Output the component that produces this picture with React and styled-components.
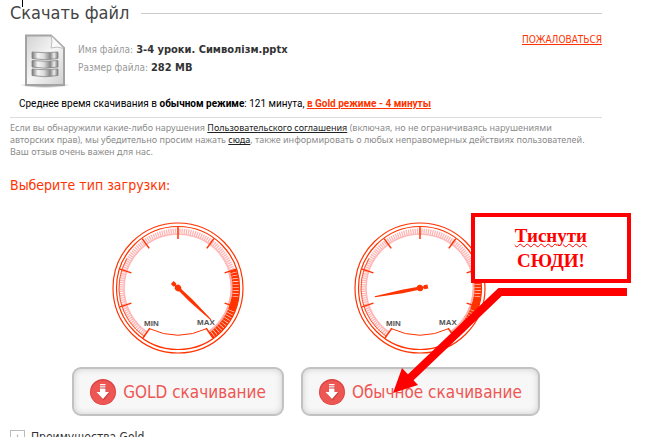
/**
 * @title 다운로드 선택 페이지
 */
import React from 'react'
import styled, {createGlobalStyle} from 'styled-components'

const RED = '#ff3300'

//게이지 각도(위쪽 기준, 시계방향)를 좌표로 변환
const polar = (angle, r) => {
  const rad = (angle * Math.PI) / 180
  return [Math.sin(rad) * r, -Math.cos(rad) * r]
}

const arc = (from, to, r) => {
  const [x1, y1] = polar(from, r)
  const [x2, y2] = polar(to, r)
  return `M${x1} ${y1}A${r} ${r} 0 ${to - from > 180 ? 1 : 0} 1 ${x2} ${y2}`
}

const ticks = [-145, -108, -72, -36, 0, 36, 72, 108, 145]

//---------------------------------------------------------------------
const Gauge = ({needle}) => (
  <GaugeSvg viewBox="-66 -66 132 132" aria-hidden="true">
    <g fill="none" stroke={RED}>
      <path d={arc(-145, 72, 57)} stroke="#ffb4b4" strokeWidth="5" strokeDasharray="1.3 .9" />
      <path d={arc(-145, 72, 54)} stroke="#ffb8b8" strokeWidth="1.6" />
      <path d={arc(72, 145, 54)} stroke="#ffb0a8" strokeWidth="3" />
      <path d={arc(72, 145, 58)} strokeWidth="7" strokeDasharray="2.4 .6" />
      <path d={arc(100, 112, 58)} strokeWidth="7" />
      <circle r="65" strokeWidth="1.2" />
      <circle r="61.5" strokeWidth="1.2" />
      <path d={arc(-145, -60, 59)} strokeWidth=".8" />
      {ticks.map((angle) => {
        const [x1, y1] = polar(angle, 49)
        const [x2, y2] = polar(angle, 61)
        return <line key={angle} x1={x1} y1={y1} x2={x2} y2={y2} strokeWidth="1.5" />
      })}
      <path d="M-29 40.5Q0 54 29 40.5" />
    </g>
    <g transform={`rotate(${needle})`} fill={RED}>
      <path d="M0 -1.5L18 -1.8L46 -.5V.5L18 1.8L0 1.5Z" />
      <path d="M-8 -2H-4V-1H0V1H-4V2H-8Z" />
      <circle r="3.2" />
    </g>
    <g fill="#555" fontFamily="Liberation Sans, Arial, sans-serif" fontSize="8" fontWeight="bold">
      <text x="-34" y="38">
        MIN
      </text>
      <text x="19" y="37">
        MAX
      </text>
    </g>
  </GaugeSvg>
)

const FileIcon = () => (
  <svg width="50" height="54" viewBox="0 0 50 54" aria-hidden="true">
    <defs>
      <linearGradient id="paper" x2="1" y2="1">
        <stop offset="0" stopColor="#d2d2d2" />
        <stop offset=".5" stopColor="#f6f6f6" />
        <stop offset="1" stopColor="#cfcfcf" />
      </linearGradient>
      <linearGradient id="disk">
        <stop offset="0" stopColor="#777" />
        <stop offset=".22" stopColor="#f4f4f4" />
        <stop offset=".45" stopColor="#ddd" />
        <stop offset=".7" stopColor="#888" />
        <stop offset=".85" stopColor="#eee" />
        <stop offset="1" stopColor="#777" />
      </linearGradient>
      <radialGradient id="shade">
        <stop offset="0" stopColor="#666" />
        <stop offset="1" stopColor="#666" stopOpacity="0" />
      </radialGradient>
    </defs>
    <ellipse cx="25" cy="51" rx="25" ry="3" fill="url(#shade)" />
    <path d="M6 1.5H31L44 14V51H6Z" fill="url(#paper)" stroke="#a3a3a3" strokeWidth="2" />
    <path d="M31 1.5L44 14.5Q37 12 31 14Q33 8 31 1.5Z" fill="#fafafa" stroke="#b0b0b0" strokeWidth=".8" />
    {[18, 26.5, 35].map((y) => (
      <path
        key={y}
        d={`M12 ${y}Q25 ${y + 1.5} 38 ${y}V${y + 6.5}Q25 ${y + 9} 12 ${y + 6.5}Z`}
        fill="url(#disk)"
        stroke="#858585"
        strokeWidth=".8"
      />
    ))}
  </svg>
)

const DownloadIcon = () => (
  <svg width="26" height="26" viewBox="0 0 26 26" aria-hidden="true">
    <circle cx="13" cy="13" r="13" fill="#d9403f" />
    <circle cx="13" cy="13.5" r="12" fill="#ee5653" />
    <path d="M10.5 7H16V13.5H20L13.5 21.5L7 13.5H10.5Z" fill="#9e3532" opacity=".6" />
    <path d="M10 5H15.5V6.3H10ZM10 7.3H15.5V8.6H10ZM10 9.6H15.5V13H19L13 20L6.5 13H10Z" fill="#fff" />
  </svg>
)

//---------------------------------------------------------------------
export default () => {
  return (
    <Page>
      <GlobalStyle />
      <Caret />
      <Title>Скачать файл</Title>

      <FileRow>
        <FileIcon />
        <FileInfo>
          <div>
            <dt>Имя файла:</dt>
            <dd>3-4 уроки. Символізм.pptx</dd>
          </div>
          <div>
            <dt>Размер файла:</dt>
            <dd>282 MB</dd>
          </div>
        </FileInfo>
        <RedLink href="#complain">ПОЖАЛОВАТЬСЯ</RedLink>
      </FileRow>

      <Average>
        Среднее время скачивания в <b>обычном режиме</b>: 121 минута,{' '}
        <RedLink href="#gold" $bold>
          в Gold режиме - 4 минуты
        </RedLink>
      </Average>

      <Notice>
        Если вы обнаружили какие-либо нарушения <a href="#terms">Пользовательского соглашения</a> (включая, но не
        ограничиваясь нарушениями
        <br />
        авторских прав), мы убедительно просим нажать <a href="#abuse">сюда</a>, также информировать о любых
        неправомерных действиях пользователей.
        <br />
        Ваш отзыв очень важен для нас.
      </Notice>

      <SubTitle>Выберите тип загрузки:</SubTitle>

      <Options>
        <Option>
          <Gauge needle={44} />
          <DownloadButton type="button">
            <DownloadIcon />
            GOLD скачивание
          </DownloadButton>
        </Option>
        <Option>
          <Gauge needle={169} />
          <DownloadButton type="button">
            <DownloadIcon />
            Обычное скачивание
          </DownloadButton>
          <Arrow viewBox="0 0 236 106" aria-hidden="true">
            <path d="M234 5H107L17 91" fill="none" stroke="#f00" strokeWidth="8" />
            <path d="M0 106L9 81L25 98Z" fill="#f00" />
          </Arrow>
          <Callout>
            <u>Тиснути</u>
            <br />
            СЮДИ!
          </Callout>
        </Option>
      </Options>

      <Benefits>
        <button type="button" aria-label="Преимущества Gold">
          +
        </button>
        Преимущества Gold
      </Benefits>
    </Page>
  )
}

//---------------------------------------------------------------------
const GlobalStyle = createGlobalStyle`
  html,
  body {
    height: 100%;
    overflow: hidden;
  }
  body {
    margin: 0;
    background: #fff;
    font-family: 'DejaVu Sans Condensed', 'Noto Sans', sans-serif;
    font-size: 10px;
  }
  * {
    box-sizing: border-box;
  }
`

const Page = styled.main`
  position: relative;
  padding: 2px 46px 0 10px;
`

const Caret = styled.span`
  position: absolute;
  top: 0;
  left: 22px;
  width: 1px;
  height: 7px;
  background: #000;
`

const Title = styled.h1`
  display: flex;
  align-items: center;
  gap: 12px;
  margin: 0;
  color: #444;
  font-size: 18px;
  font-weight: normal;
  line-height: 22px;

  &::after {
    content: '';
    flex: 1;
    height: 1px;
    background: #ccc;
  }
`

const FileRow = styled.section`
  display: flex;
  align-items: flex-start;
  margin-top: 10px;
  padding-left: 10px;
`

const FileInfo = styled.dl`
  flex: 1;
  margin: 7px 0 0 8px;
  line-height: 18px;

  div {
    display: flex;
    align-items: baseline;
    gap: 3px;
  }
  dt {
    color: #999;
  }
  dd {
    margin: 0;
    color: #333;
    font-size: 11px;
    font-weight: bold;
  }
`

const RedLink = styled.a`
  color: ${RED};
  font-weight: ${({$bold}) => ($bold ? 'bold' : 'normal')};
  line-height: 12px;
  white-space: nowrap;
`

const Average = styled.p`
  margin: 9px 0 0;
  padding: 0 0 6px 9px;
  border-bottom: 1px solid #ddd;
  color: #000;
  font-family: Roboto, sans-serif;
  line-height: 14px;
`

const Notice = styled.p`
  margin: 4px 0 0;
  color: #8c8c8c;
  font-family: 'Noto Sans', sans-serif;
  font-size: 9px;
  line-height: 12px;

  a {
    color: #222;
  }
`

const SubTitle = styled.h2`
  margin: 17px 0 0;
  color: ${RED};
  font-size: 14px;
  font-weight: normal;
  line-height: 20px;
`

const Options = styled.section`
  display: flex;
  justify-content: center;
  gap: 17px;
  margin-top: 27px;
`

const Option = styled.div`
  position: relative;
  display: flex;
  flex-direction: column;
  align-items: center;
  gap: 13px;
`

const GaugeSvg = styled.svg`
  width: 132px;
  height: 132px;
`

const DownloadButton = styled.button`
  display: flex;
  align-items: center;
  gap: 7px;
  height: 49px;
  padding: 0 16px;
  border: 2px solid #c2c2c2;
  border-radius: 9px;
  background: #f7f7f7;
  box-shadow: inset 0 0 6px #ccc;
  color: #ee5653;
  font-family: inherit;
  font-size: 17px;
  white-space: nowrap;
`

const Arrow = styled.svg`
  position: absolute;
  top: 65px;
  left: 92px;
  width: 236px;
  height: 106px;
  pointer-events: none;
`

const Callout = styled.div`
  position: absolute;
  top: -9px;
  left: 170px;
  width: 160px;
  padding: 6px;
  border: 4px solid #f00;
  background: #fff;
  color: #f00;
  font: bold 19px/25px 'Liberation Serif', 'Times New Roman', serif;
  text-align: center;

  u {
    text-decoration: underline wavy #f00 1px;
  }
`

const Benefits = styled.div`
  display: flex;
  align-items: center;
  gap: 6px;
  margin-top: 14px;
  color: #333;
  font-size: 12px;
  line-height: 15px;

  button {
    width: 15px;
    height: 15px;
    padding: 0;
    border: 1px solid #bbb;
    background: #fff;
    color: #999;
    font-size: 11px;
    line-height: 11px;
  }
`
